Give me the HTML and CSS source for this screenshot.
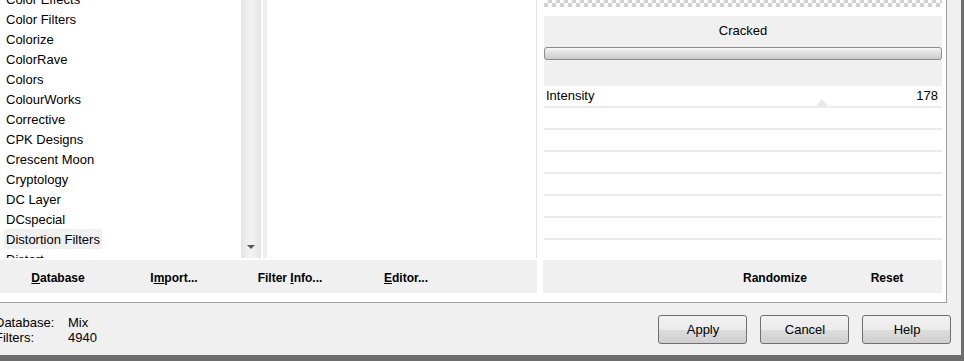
FILE: index.html
```html
<!DOCTYPE html>
<html lang="en">
<head>
    <meta charset="UTF-8">
    <title>Filters Unlimited</title>
    <link rel="stylesheet" href="styles.css">
</head>
<body>

    <div class="window">
        <div class="main">
            <div class="panes">
                <!-- Category list -->
                <div class="list-pane">
                    <ul class="filter-list">
                        <li>Color Effects</li>
                        <li>Color Filters</li>
                        <li>Colorize</li>
                        <li>ColorRave</li>
                        <li>Colors</li>
                        <li>ColourWorks</li>
                        <li>Corrective</li>
                        <li>CPK Designs</li>
                        <li>Crescent Moon</li>
                        <li>Cryptology</li>
                        <li>DC Layer</li>
                        <li>DCspecial</li>
                        <li class="selected">Distortion Filters</li>
                        <li>Distort</li>
                    </ul>
                </div>
                <div class="scrollbar"><span class="arrow-down"></span></div>

                <!-- Filter list (empty) -->
                <div class="preview"></div>

                <!-- Preview and parameters -->
                <div class="controls">
                    <div class="checker"></div>
                    <div class="preset">
                        <div class="preset-name">Cracked</div>
                        <div class="preset-slider"></div>
                    </div>
                    <div class="param-row">
                        <span>Intensity</span>
                        <span>178</span>
                        <span class="thumb"></span>
                    </div>
                    <div class="param-row"></div>
                    <div class="param-row"></div>
                    <div class="param-row"></div>
                    <div class="param-row"></div>
                    <div class="param-row"></div>
                    <div class="param-row"></div>
                </div>
            </div>

            <div class="bars">
                <div class="bar bar-left">
                    <span class="bar-btn"><u>D</u>atabase</span>
                    <span class="bar-btn">I<u>m</u>port...</span>
                    <span class="bar-btn">Filter <u>I</u>nfo...</span>
                    <span class="bar-btn"><u>E</u>ditor...</span>
                </div>
                <div class="bar bar-right">
                    <span class="bar-btn randomize">Randomize</span>
                    <span class="bar-btn">Reset</span>
                </div>
            </div>
        </div>

        <div class="status">
            <div class="info">
                <div><span class="info-label">Database:</span><span>Mix</span></div>
                <div><span class="info-label">Filters:</span><span>4940</span></div>
            </div>
            <div class="actions">
                <button type="button">Apply</button>
                <button type="button">Cancel</button>
                <button type="button">Help</button>
            </div>
        </div>
    </div>

</body>
</html>
```

FILE: styles.css
```css
body {
    margin: 0;
    width: 964px;
    height: 361px;
    overflow: hidden;
    background-color: #6d6d6d;
    font-family: "Liberation Sans", Arial, sans-serif;
    font-size: 13px;
    color: #000;
}

.window {
    width: 961px;
    height: 355px;
    background-color: #f0f0f0;
    display: flex;
    flex-direction: column;
}

.main {
    width: 946px;
    height: 302px;
    background-color: #fff;
    border-right: 1px solid #a0a0a0;
    border-bottom: 1px solid #a0a0a0;
    display: flex;
    flex-direction: column;
}

.panes {
    display: flex;
    height: 260px;
}

/* Category list */
.list-pane {
    width: 241px;
    height: 258px;
    overflow: hidden;
}

.filter-list {
    list-style: none;
    margin: -11px 0 0;
    padding: 0;
}

.filter-list li {
    width: fit-content;
    height: 20px;
    line-height: 22px;
    margin-left: 4px;
    padding: 0 2px;
    white-space: nowrap;
}

.filter-list .selected {
    background-color: #f0f0f0;
}

.scrollbar {
    width: 20px;
    height: 258px;
    background: linear-gradient(to right, #e4e4e4, #f3f3f3 50%, #e4e4e4);
    display: flex;
    flex-direction: column;
    justify-content: flex-end;
    align-items: center;
}

.arrow-down {
    width: 0;
    height: 0;
    border-left: 4px solid transparent;
    border-right: 4px solid transparent;
    border-top: 4px solid #5a5a5a;
    margin-bottom: 9px;
}

.preview {
    width: 269px;
    height: 258px;
    margin-left: 2px;
    border-left: 4px solid #efefef;
    border-right: 1px solid #e2e2e2;
}

/* Right side: preset and parameters */
.controls {
    width: 398px;
    margin-left: 7px;
}

.checker {
    height: 7px;
    background: repeating-conic-gradient(#d0d0d0 0 25%, #fff 0 50%) 0 -1px / 8px 8px;
}

.preset {
    margin-top: 9px;
    height: 70px;
    background-color: #f0f0f0;
}

.preset-name {
    height: 31px;
    line-height: 30px;
    text-align: center;
}

.preset-slider {
    height: 11px;
    border: 1px solid #8c8c8c;
    border-radius: 3px;
    background: linear-gradient(#f6f6f6, #e0e0e0 45%, #cbcbcb);
}

.param-row {
    position: relative;
    height: 20px;
    line-height: 20px;
    border-bottom: 2px solid #ebebeb;
    display: flex;
    justify-content: space-between;
    padding: 0 4px 0 2px;
}

.thumb {
    position: absolute;
    left: 272px;
    bottom: 0;
    width: 0;
    height: 0;
    border-left: 6px solid transparent;
    border-right: 6px solid transparent;
    border-bottom: 7px solid #e8e8e8;
}

/* Button bars under the panes */
.bars {
    display: flex;
    height: 33px;
}

.bar {
    background-color: #f0f0f0;
    display: flex;
    align-items: center;
    padding-top: 3px;
    box-sizing: border-box;
    font-weight: bold;
    font-size: 12px;
}

.bar-left {
    width: 537px;
}

.bar-left .bar-btn {
    width: 116px;
    text-align: center;
}

.bar-right {
    width: 399px;
    margin-left: 6px;
    justify-content: flex-end;
}

.bar-right .bar-btn {
    width: 110px;
    text-align: center;
}

.bar-right .randomize {
    width: 114px;
}

/* Status and dialog buttons */
.status {
    flex: 1;
    display: flex;
    justify-content: space-between;
    align-items: flex-start;
    padding-top: 12px;
}

.info {
    margin-left: -5px;
    line-height: 15px;
}

.info-label {
    display: inline-block;
    width: 73px;
}

.actions {
    display: flex;
    gap: 13px;
    margin-right: 10px;
}

.actions button {
    width: 89px;
    height: 29px;
    padding: 0 0 0 1px;
    font-family: "Liberation Sans", Arial, sans-serif;
    font-size: 13px;
    color: #000;
    border: 1px solid #707070;
    border-radius: 3px;
    background: linear-gradient(#f2f2f2, #ebebeb 50%, #dddddd 50%, #cfcfcf);
}
```
